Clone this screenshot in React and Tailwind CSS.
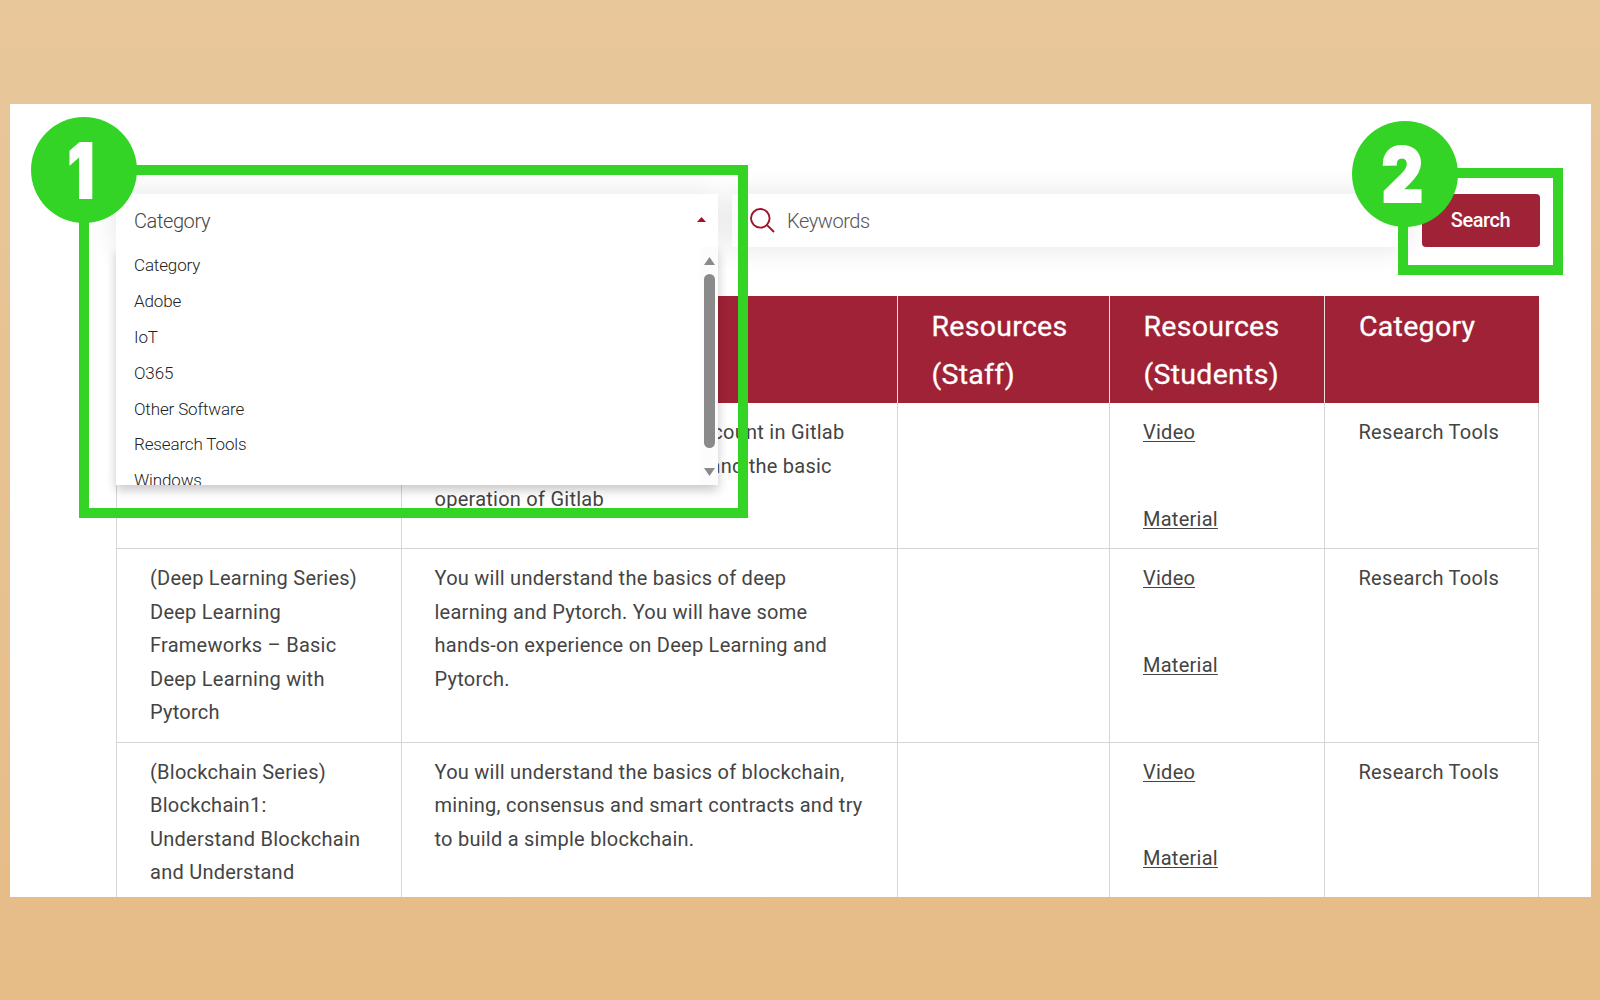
const CATEGORIES = ["Category", "Adobe", "IoT", "O365", "Other Software", "Research Tools", "Windows"];

const HEADERS = [
  [],
  [],
  ["Resources", "(Staff)"],
  ["Resources", "(Students)"],
  ["Category"],
];

const ROWS = [
  {
    height: "h-[146px]",
    title: [],
    description: [
      { text: "account in Gitlab", indent: "pl-[256px]" },
      { text: "and the basic", indent: "pl-[275px]" },
      { text: "operation of Gitlab" },
    ],
  },
  {
    height: "h-[193.5px]",
    title: ["(Deep Learning Series)", "Deep Learning", "Frameworks – Basic", "Deep Learning with", "Pytorch"],
    description: [
      { text: "You will understand the basics of deep" },
      { text: "learning and Pytorch. You will have some" },
      { text: "hands-on experience on Deep Learning and" },
      { text: "Pytorch." },
    ],
  },
  {
    height: "h-[194px]",
    title: ["(Blockchain Series)", "Blockchain1:", "Understand Blockchain", "and Understand"],
    description: [
      { text: "You will understand the basics of blockchain," },
      { text: "mining, consensus and smart contracts and try" },
      { text: "to build a simple blockchain." },
    ],
  },
];

const COLS = "grid grid-cols-[284.5px_496px_212px_215.5px_214px]";
const CELL = "border-r border-b border-[#d6d6d6] pl-[33px] pt-[13px] whitespace-nowrap";
const LINK_CELL = "border-r border-b border-[#d6d6d6] pl-[33.5px] pt-[13px] whitespace-nowrap";

function CategorySelect() {
  return (
    <div className="relative z-10 w-[602px] h-[53px] bg-white shadow-[0_0_30px_rgba(0,0,0,0.11)]">
      <div className="absolute left-0 top-full h-[238px] w-full shadow-[0_5px_10px_rgba(0,0,0,0.22)]" />
      <div className="relative flex h-full items-center justify-between bg-white pl-[18px] pr-3">
        <span className="text-[20px] font-light tracking-[-0.4px] text-[#444]">Category</span>
        <svg width="9" height="5" viewBox="0 0 9 5" className="-mt-0.5">
          <path d="M0 5 L4.5 0 L9 5Z" fill="#a01228" />
        </svg>
      </div>
      <div className="absolute left-0 top-full flex h-[238px] w-full justify-between overflow-hidden bg-white">
        <ul className="pl-[18px] pt-px">
          {CATEGORIES.map((name) => (
            <li key={name} className="h-[35.9px] text-[17px] leading-[35px] font-light tracking-[-0.14px] text-[#222]">{name}</li>
          ))}
        </ul>
        <div className="flex w-[18px] flex-col items-center bg-[#fcfcfc] pt-[10px] pb-[9px]">
          <svg width="11" height="8" viewBox="0 0 11 8">
            <path d="M5.5 0 L11 8 H0Z" fill="#8a8a8a" />
          </svg>
          <div className="mt-[9px] h-[174px] w-[11px] rounded-full bg-[#8a8a8a]" />
          <svg width="11" height="8" viewBox="0 0 11 8" className="mt-auto">
            <path d="M5.5 8 L11 0 H0Z" fill="#8a8a8a" />
          </svg>
        </div>
      </div>
    </div>
  );
}

function SearchBar() {
  return (
    <div className="flex h-[53px]">
      <CategorySelect />
      <div className="ml-[14px] flex w-[673px] items-center bg-white pl-[18px] shadow-[0_0_30px_rgba(0,0,0,0.11)]">
        <svg width="25" height="25" viewBox="0 0 25 25" fill="none" stroke="#a01228" strokeWidth="1.9">
          <circle cx="10.3" cy="10.3" r="9.3" />
          <path d="M16.8 16.8 L24 24" />
        </svg>
        <span className="ml-[12px] text-[20px] font-light tracking-[-0.45px] text-[#555]">Keywords</span>
      </div>
      <button className="ml-[17px] w-[118px] rounded-[4px] bg-[#a02236] pr-px pb-0.5 text-[20px] font-medium tracking-[-0.4px] text-white">
        Search
      </button>
    </div>
  );
}

function CourseTable() {
  return (
    <div className="w-[1423px] border-l border-[#d6d6d6]">
      <div className={`${COLS} h-[107px] bg-[#a02236]`}>
        {HEADERS.map((lines, i) => (
          <div key={i} className="border-r border-[#f0dfe2] pl-[34px] pt-[7px] whitespace-nowrap last:border-r-0">
            {lines.map((line) => (
              <p key={line} className="text-[28.5px] leading-[47.5px] tracking-[0.28px] text-white [-webkit-text-stroke:0.3px_white]">{line}</p>
            ))}
          </div>
        ))}
      </div>
      {ROWS.map((row, i) => (
        <div key={i} className={`${COLS} ${row.height} text-[20px] leading-[33.6px] tracking-[0.25px] text-[#444]`}>
          <div className={CELL}>
            {row.title.map((line) => <p key={line}>{line}</p>)}
          </div>
          <div className={CELL}>
            {row.description.map((line) => <p key={line.text} className={line.indent}>{line.text}</p>)}
          </div>
          <div className={CELL} />
          <div className={LINK_CELL}>
            <p className="mb-[53px] underline decoration-1 underline-offset-2">Video</p>
            <p className="underline decoration-1 underline-offset-2">Material</p>
          </div>
          <div className={`${LINK_CELL} tracking-[0.3px]`}>Research Tools</div>
        </div>
      ))}
    </div>
  );
}

// numbered green marker, with the frame it belongs to
function Callout({ number, frame, badge, digit }) {
  return (
    <>
      <div className={`absolute z-20 border-[10px] border-[#34d426] ${frame}`} />
      <div className={`absolute z-20 flex h-[106px] w-[106px] items-center justify-center rounded-full bg-[#34d426] ${badge}`}>
        <span className={`font-['Inter',sans-serif] text-[75px] leading-none font-black text-white [-webkit-text-stroke:2px_white] ${digit}`}>{number}</span>
      </div>
    </>
  );
}

export default function App() {
  return (
    <div className="relative h-[1000px] w-[1600px] overflow-hidden bg-linear-to-b from-[#e8c79b] to-[#e6bc87] pt-[104px] pl-[10px] font-['Roboto',sans-serif]">
      <div className="h-[793px] w-[1581px] overflow-hidden bg-white pt-[90px] pl-[106px]">
        <SearchBar />
        <div className="mt-[49px]">
          <CourseTable />
        </div>
      </div>
      <Callout number="1" frame="left-[79px] top-[165px] h-[353px] w-[669px]" badge="left-[31px] top-[117px]" digit="-ml-[7px] scale-x-[0.78]" />
      <Callout number="2" frame="left-[1398px] top-[168px] h-[107px] w-[165px]" badge="left-[1352px] top-[121px]" digit="-ml-[5px] scale-x-[0.86]" />
    </div>
  );
}
